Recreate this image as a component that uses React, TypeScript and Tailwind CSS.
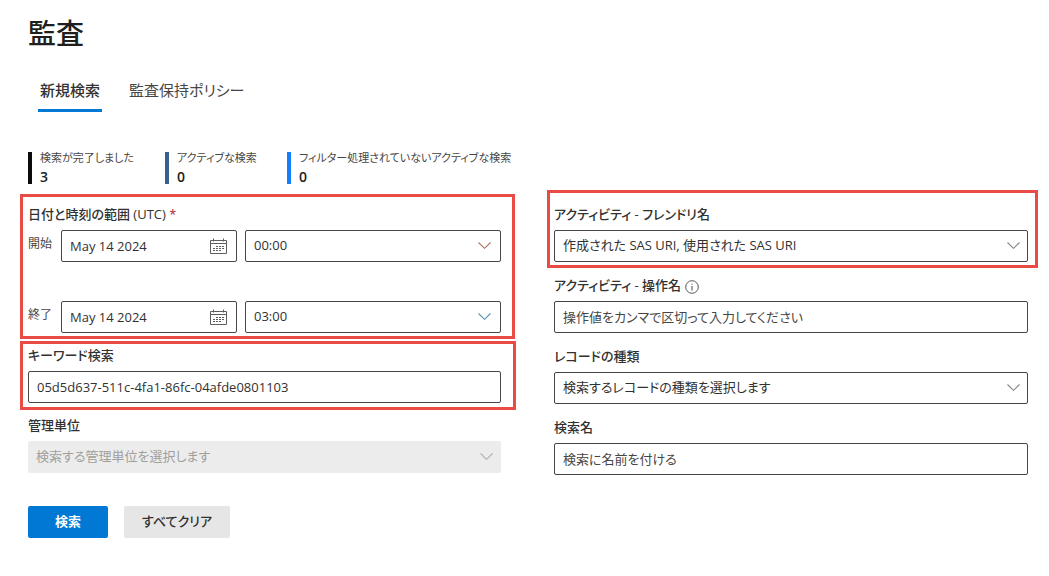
import type { ReactNode } from "react";

const fieldBox =
  "block h-8 w-full min-w-0 appearance-none rounded-xs border border-[#484644] bg-white px-2 text-[13px] text-[#323130] placeholder:text-[#484644] placeholder:opacity-100 focus:outline-2 focus:outline-[#0078d4]";

function Highlight({ className }: { className: string }) {
  return (
    <span
      aria-hidden="true"
      className={`pointer-events-none absolute border-3 border-[#e94b45] ${className}`}
    />
  );
}

function Chevron({ className }: { className: string }) {
  return (
    <svg
      aria-hidden="true"
      viewBox="0 0 13 7"
      className={`pointer-events-none absolute top-3 h-[7px] w-[13px] ${className}`}
      fill="none"
      stroke="currentColor"
      strokeWidth="1.1"
    >
      <path d="M0.5 0.5 6.5 6.3 12.5 0.5" />
    </svg>
  );
}

function CalendarIcon() {
  return (
    <svg
      aria-hidden="true"
      viewBox="0 0 17 16"
      className="pointer-events-none absolute top-2 right-[10px] h-4 w-[17px] text-[#605e5c]"
      fill="none"
      stroke="currentColor"
    >
      <path d="M0.5 2.5h16v13h-16zM0.5 5.5h16M3.5 0.5v3M13.5 0.5v3" />
      <path
        d="M6 8.5h8M3 10.5h11M3 12.5h8"
        strokeDasharray="2 1"
        strokeWidth="1"
      />
    </svg>
  );
}

function Label({ htmlFor, children }: { htmlFor: string; children: ReactNode }) {
  return (
    <label
      htmlFor={htmlFor}
      className="block h-[30px] text-[13px] leading-[29px] font-medium text-[#323130]"
    >
      {children}
    </label>
  );
}

function Select({
  id,
  text,
  label,
  disabled,
  chevron = "right-2 text-[#8a8886]",
}: {
  id: string;
  text: string;
  label?: string;
  disabled?: boolean;
  chevron?: string;
}) {
  return (
    <div className="relative min-w-0">
      <select
        id={id}
        aria-label={label}
        disabled={disabled}
        className={
          disabled
            ? "block h-8 w-full appearance-none rounded-xs bg-[#ececec] px-2 text-[13px] text-[#a19f9d] opacity-100"
            : fieldBox
        }
      >
        <option>{text}</option>
      </select>
      <Chevron className={chevron} />
    </div>
  );
}

function DateRow({
  id,
  label,
  time,
  chevron,
}: {
  id: string;
  label: string;
  time: string;
  chevron: string;
}) {
  return (
    <div className="grid grid-cols-[25px_11fr_16fr] items-start gap-2">
      <label htmlFor={id} className="text-xs leading-7 whitespace-nowrap text-[#484644]">
        {label}
      </label>
      <div className="relative min-w-0">
        <input id={id} type="text" defaultValue="May 14 2024" className={fieldBox} />
        <CalendarIcon />
      </div>
      <Select id={`${id}-time`} label={`${label} 時刻`} text={time} chevron={chevron} />
    </div>
  );
}

function Stat({ bar, label, value }: { bar: string; label: string; value: string }) {
  return (
    <div className={`h-8 border-l-4 pl-2 whitespace-nowrap ${bar}`}>
      <dt className="text-[11px] leading-3 text-[#484644]">{label}</dt>
      <dd className="pt-[2px] text-sm leading-[22px] font-semibold text-[#201f1e]">{value}</dd>
    </div>
  );
}

export default function App() {
  return (
    <main className="bg-white pt-3 pr-[21px] pb-9 pl-7 font-['Open_Sans','Noto_Sans_CJK_JP',sans-serif] text-[#323130] [font-feature-settings:'palt']">
      <h1 className="text-[28px] leading-[42px] font-medium text-[#201f1e]">監査</h1>

      <nav className="mt-[14px] flex gap-[25px] pl-[10px] text-[15px]">
        <a
          href="#search"
          aria-current="page"
          className="h-11 border-b-3 border-[#0078d4] px-[2px] leading-[44px] font-medium"
        >
          新規検索
        </a>
        <a href="#policy" className="h-11 px-[2px] leading-[44px] text-[#484644]">
          監査保持ポリシー
        </a>
      </nav>

      <dl className="mt-10 grid grid-cols-[137px_122px_auto]">
        <Stat bar="border-[#0b0b0b]" label="検索が完了しました" value="3" />
        <Stat bar="border-[#36618f]" label="アクティブな検索" value="0" />
        <Stat bar="border-[#157efb]" label="フィルター処理されていないアクティブな検索" value="0" />
      </dl>

      <form className="mt-4" onSubmit={(e) => e.preventDefault()}>
        <div className="grid grid-cols-[473fr_474fr] gap-x-[53px]">
          <div className="flex min-w-0 flex-col gap-2">
            <div className="relative">
              <Label htmlFor="start">
                日付と時刻の範囲 (UTC) <span className="text-[#a4262c]">*</span>
              </Label>
              <div className="grid gap-[39px]">
                <DateRow id="start" label="開始" time="00:00" chevron="right-[10px] text-[#b0755c]" />
                <DateRow id="end" label="終了" time="03:00" chevron="right-[10px] text-[#5a93ad]" />
              </div>
              <Highlight className="-top-[6px] -right-[14px] -bottom-[6px] -left-2" />
            </div>
            <div className="relative">
              <Label htmlFor="keyword">キーワード検索</Label>
              <input
                id="keyword"
                type="text"
                defaultValue="05d5d637-511c-4fa1-86fc-04afde0801103"
                className={fieldBox}
              />
              <Highlight className="top-0 -right-[15px] -bottom-[7px] -left-2" />
            </div>
            <div>
              <Label htmlFor="unit">管理単位</Label>
              <Select
                id="unit"
                text="検索する管理単位を選択します"
                disabled
                chevron="right-2 text-[#b3b0ad]"
              />
            </div>
          </div>

          <div className="flex min-w-0 flex-col gap-[9px]">
            <div className="relative">
              <Label htmlFor="friendly">アクティビティ - フレンドリ名</Label>
              <Select id="friendly" text="作成された SAS URI, 使用された SAS URI" />
              <Highlight className="-top-[10px] -right-[10px] -bottom-[6px] -left-[7px]" />
            </div>
            <div>
              <Label htmlFor="operation">
                <span className="flex items-center gap-1">
                  アクティビティ - 操作名
                  <svg
                    aria-hidden="true"
                    viewBox="0 0 14 14"
                    className="mt-[2px] size-[14px] text-[#484644]"
                    fill="none"
                    stroke="currentColor"
                  >
                    <circle cx="7" cy="7" r="6.3" strokeWidth="0.9" />
                    <path d="M7 6v4.5M7 3.6v1.1" />
                  </svg>
                </span>
              </Label>
              <input
                id="operation"
                type="text"
                placeholder="操作値をカンマで区切って入力してください"
                className={fieldBox}
              />
            </div>
            <div>
              <Label htmlFor="record">レコードの種類</Label>
              <Select id="record" text="検索するレコードの種類を選択します" />
            </div>
            <div>
              <Label htmlFor="name">検索名</Label>
              <input id="name" type="text" placeholder="検索に名前を付ける" className={fieldBox} />
            </div>
          </div>
        </div>

        <div className="mt-[31px] flex gap-4">
          <button
            type="submit"
            className="h-8 w-20 rounded-xs bg-[#0078d4] text-[13px] font-bold text-white"
          >
            検索
          </button>
          <button
            type="button"
            className="h-8 rounded-xs bg-[#e6e6e6] px-[18px] text-[13px] font-medium"
          >
            すべてクリア
          </button>
        </div>
      </form>
    </main>
  );
}
